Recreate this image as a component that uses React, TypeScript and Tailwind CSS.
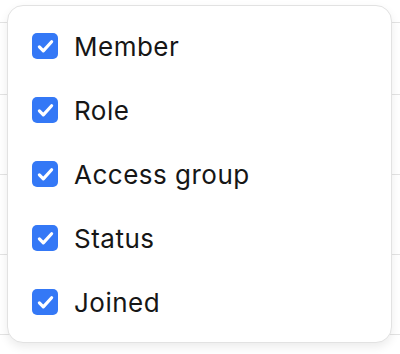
const columns = ["Member", "Role", "Access group", "Status", "Joined"];

function CheckBox() {
  return (
    <span className="flex h-[26px] w-[26px] shrink-0 items-center justify-center rounded-[5px] bg-[#3478f6]">
      <svg viewBox="0 0 24 24" className="h-[21px] w-[21px]" fill="none">
        <path
          d="M5 12.5l4.5 4.5L19 6.5"
          stroke="white"
          strokeWidth="3.6"
          strokeLinecap="round"
          strokeLinejoin="round"
        />
      </svg>
    </span>
  );
}

export default function App() {
  return (
    <div className="relative h-[354px] w-[400px] overflow-hidden bg-white font-['Inter',sans-serif]">
      {/* table behind the menu */}
      <div className="flex flex-col">
        <div className="h-[23px] border-b border-[#e3e3e3]" />
        <div className="h-[72px] border-b border-[#e3e3e3]" />
        <div className="h-[80px] border-b border-[#e3e3e3]" />
        <div className="h-[80px] border-b border-[#e3e3e3]" />
        <div className="h-[80px] border-b border-[#e3e3e3]" />
      </div>

      <div className="absolute left-[7px] top-[5px] w-[385px] rounded-[16px] border border-[#e2e2e2] bg-white py-[8px] shadow-[0_4px_10px_rgba(0,0,0,0.08)]">
        {columns.map((c) => (
          <label key={c} className="flex h-16 items-center gap-[16px] pl-[24px]">
            <CheckBox />
            <span className="text-[26px] font-normal tracking-[0.5px] text-[#161616]">{c}</span>
          </label>
        ))}
      </div>
    </div>
  );
}
